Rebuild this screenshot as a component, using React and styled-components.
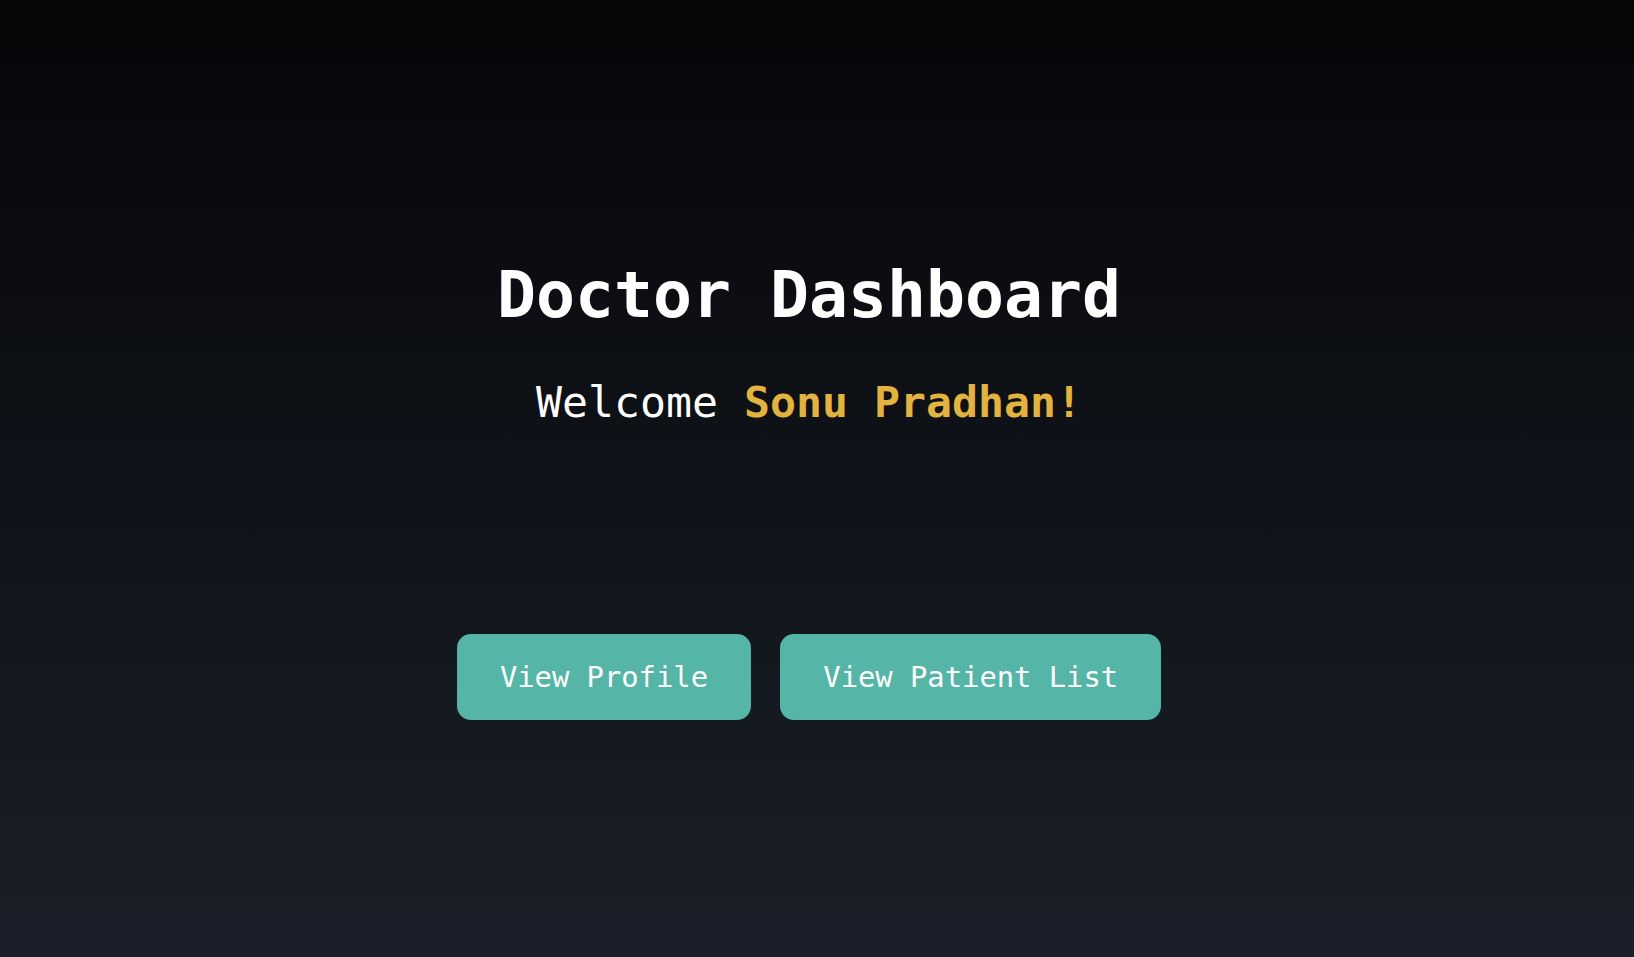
import React from "react";
import styled, { createGlobalStyle } from "styled-components";

const GlobalStyle = createGlobalStyle`
  * {
    box-sizing: border-box;
  }

  body {
    margin: 0;
    font-family: "DejaVu Sans Mono", "Liberation Mono", monospace;
  }
`;

const Page = styled.main`
  min-height: 100vh;
  padding: 20px 16px 0 0;
  display: flex;
  flex-direction: column;
  align-items: center;
  justify-content: center;
  background: linear-gradient(to bottom, #050608 0%, #1a1f29 100%);
  color: #ffffff;
`;

const Title = styled.h1`
  margin: 0;
  font-size: 64.8px;
  font-weight: bold;
  line-height: normal;
`;

const Welcome = styled.p`
  margin: 45px 0 0;
  font-size: 43.2px;
  line-height: normal;
`;

const Name = styled.span`
  color: #e2b33f;
  font-weight: bold;
`;

const Actions = styled.div`
  display: flex;
  gap: 29px;
  margin-top: 207px;
`;

const ActionButton = styled.button`
  padding: 0.9em 1.5em;
  border: none;
  border-radius: 14px;
  background: #55b5a6;
  color: #ffffff;
  font-family: inherit;
  font-size: 28.8px;
  line-height: normal;
  cursor: pointer;
  transition: background 0.2s;

  &:hover {
    background: #4aa394;
  }
`;

const App = () => {
  const doctorName = "Sonu Pradhan";

  return (
    <>
      <GlobalStyle />
      <Page>
        <Title>Doctor Dashboard</Title>
        <Welcome>
          Welcome <Name>{doctorName}!</Name>
        </Welcome>
        <Actions>
          <ActionButton>View Profile</ActionButton>
          <ActionButton>View Patient List</ActionButton>
        </Actions>
      </Page>
    </>
  );
};

export default App;
